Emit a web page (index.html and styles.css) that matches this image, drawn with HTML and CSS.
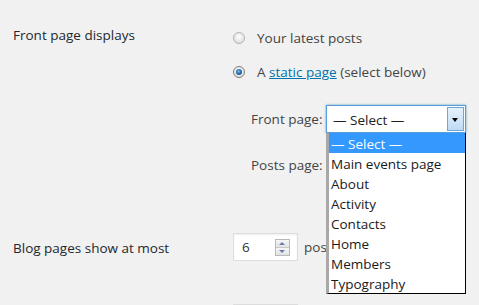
FILE: index.html
```html
<!DOCTYPE html>
<html>
<head>
<meta charset="utf-8">
<link rel="stylesheet" href="styles.css">
</head>
<body>
<div class="form">
  <div class="row row-front">
    <div class="label">Front page displays</div>
    <div class="field">
      <label class="radio first"><span class="rb"></span><span>Your latest posts</span></label>
      <label class="radio second"><span class="rb checked"></span><span>A <a href="#">static page</a> (select below)</span></label>
      <div class="sub">
        <div class="subrow">
          <span class="sublabel">Front page:</span>
          <div class="select-wrap">
            <div class="select focused"><span class="sel-text">— Select —</span><span class="arrow"></span></div>
            <ul class="dropdown">
              <li class="active">— Select —</li>
              <li>Main events page</li>
              <li>About</li>
              <li>Activity</li>
              <li>Contacts</li>
              <li>Home</li>
              <li>Members</li>
              <li>Typography</li>
            </ul>
          </div>
        </div>
        <div class="subrow second-sub">
          <span class="sublabel">Posts page:</span>
          <div class="select-wrap">
            <div class="select"><span class="arrow"></span></div>
          </div>
        </div>
      </div>
    </div>
  </div>
  <div class="row row-blog">
    <div class="label">Blog pages show at most</div>
    <div class="field inline">
      <div class="number"><span class="num-val">6</span><span class="spin"><span class="up"></span><span class="down"></span></span></div>
      <span class="unit">posts</span>
    </div>
  </div>
  <div class="row row-next">
    <div class="label"></div>
    <div class="field">
      <div class="number"></div>
    </div>
  </div>
</div>
</body>
</html>
```

FILE: styles.css
```css
html, body {
  margin: 0;
  padding: 0;
}
body {
  background: #f1f1f1;
  font-family: "Open Sans", sans-serif;
  font-size: 13.5px;
  color: #444;
  overflow: hidden;
  height: 305px;
}
.form {
  padding: 20px 0 0 13px;
}
.row {
  display: flex;
}
.label {
  width: 220px;
  flex: none;
  color: #23282d;
  line-height: 20px;
  padding-top: 5px;
}
.field {
  flex: 1;
}
.radio {
  display: flex;
  align-items: center;
  gap: 12px;
  height: 20px;
  line-height: 20px;
}
.radio.first { margin-top: 8px; }
.radio.second { margin-top: 14px; }
.rb {
  width: 10px;
  height: 10px;
  border: 1px solid #b4b4b4;
  border-radius: 50%;
  background: radial-gradient(circle at 50% 40%, #ffffff 0%, #e6e6e6 60%, #d2d2d2 100%);
  flex: none;
  position: relative;
}
.rb.checked {
  border-color: #7a7a7a;
  background: radial-gradient(circle at 50% 40%, #ffffff 0%, #d8d8d8 100%);
}
.rb.checked::after {
  content: "";
  position: absolute;
  left: 2px;
  top: 2px;
  width: 6px;
  height: 6px;
  border-radius: 50%;
  background: radial-gradient(circle at 45% 40%, #7ac3f0 0%, #2a6fb0 45%, #0c2f5a 100%);
}
.radio a {
  color: #0073aa;
  text-decoration: underline;
}
.sub {
  margin-top: 23px;
  padding-left: 18px;
}
.subrow {
  display: flex;
  align-items: center;
  height: 28px;
}
.second-sub {
  margin-top: 18px;
}
.sublabel {
  width: 75px;
  flex: none;
  color: #444;
}
.select-wrap {
  position: relative;
  width: 140px;
  height: 28px;
}
.select {
  box-sizing: border-box;
  width: 140px;
  height: 28px;
  background: #fff;
  border: 1px solid #ddd;
  display: flex;
  align-items: center;
  justify-content: space-between;
  color: #222;
}
.select.focused {
  border-color: #5b9dd9;
  box-shadow: 0 0 2px rgba(30, 140, 190, 0.8);
}
.sel-text {
  padding-left: 6px;
  padding-top: 1px;
}
.arrow {
  box-sizing: border-box;
  width: 17px;
  height: 24px;
  margin-left: auto;
  margin-right: 1px;
  background: linear-gradient(#e6f1fc, #bfdcf5);
  border: 1px solid #6ea6d6;
  position: relative;
}
.arrow::after {
  content: "";
  position: absolute;
  left: 4px;
  top: 10px;
  border-left: 3.5px solid transparent;
  border-right: 3.5px solid transparent;
  border-top: 4px solid #000;
}
.dropdown {
  position: absolute;
  z-index: 5;
  left: 0;
  top: 28px;
  width: 140px;
  box-sizing: border-box;
  margin: 0;
  padding: 0;
  list-style: none;
  background: #fff;
  border-left: 3px solid #a8a8a8;
  border-right: 1px solid #000;
  border-bottom: 1px solid #000;
}
.dropdown li {
  box-sizing: border-box;
  height: 20px;
  line-height: 20px;
  padding: 1px 0 0 2px;
  color: #1a1a1a;
  white-space: nowrap;
  overflow: hidden;
}
.dropdown li.active {
  background: #3399ff;
  color: #fff;
}
.row-blog {
  margin-top: 54px;
}
.inline {
  display: flex;
  align-items: center;
  gap: 6px;
  height: 28px;
}
.number {
  box-sizing: border-box;
  width: 65px;
  height: 28px;
  background: #fff;
  border: 1px solid #ddd;
  box-shadow: inset 0 1px 2px rgba(0, 0, 0, 0.07);
  display: flex;
  align-items: center;
  justify-content: space-between;
  color: #333;
}
.num-val {
  padding-left: 8px;
}
.spin {
  display: flex;
  flex-direction: column;
  margin-right: 7px;
  width: 13px;
  border: 1px solid #b9b9b9;
  background: #eee;
}
.spin span {
  height: 7px;
  position: relative;
  background: linear-gradient(#f6f6f6, #e2e2e2);
}
.spin .up { border-bottom: 1px solid #c8c8c8; }
.spin .up::after,
.spin .down::after {
  content: "";
  position: absolute;
  left: 3px;
  border-left: 3.5px solid transparent;
  border-right: 3.5px solid transparent;
}
.spin .up::after {
  top: 2px;
  border-bottom: 3px solid #6a7bb0;
}
.spin .down::after {
  top: 2px;
  border-top: 3px solid #6a7bb0;
}
.unit {
  color: #444;
}
.row-next {
  margin-top: 43px;
}
```
